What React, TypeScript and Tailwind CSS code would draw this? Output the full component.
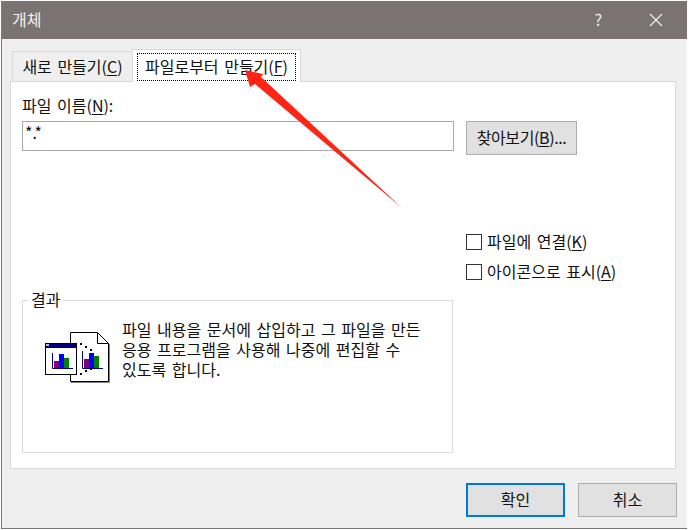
import React from 'react';

const FONT = "font-['Noto_Sans_CJK_KR','Noto_Sans',sans-serif] [word-spacing:2px]";

function Key({ children }: { children: React.ReactNode }) {
  return <span className="underline underline-offset-2">{children}</span>;
}

function Checkbox({ label, k }: { label: string; k: string }) {
  return (
    <div className="flex items-center gap-[5px] h-[16px]">
      <div className="w-[16px] h-[16px] border border-[#333] bg-white" />
      <span className="text-[16px] leading-[16px] pb-[3px] text-[#111] whitespace-nowrap">
        {label}(<Key>{k}</Key>)
      </span>
    </div>
  );
}

function ObjectIcon() {
  return (
    <svg width="65" height="52" viewBox="0 0 65 52" className="shrink-0">
      {/* back page */}
      <path d="M25.500 .5H52.500L63.500 11.500V49.500H25.500Z" fill="#fff" stroke="#000" />
      <path d="M52.500 .5V11.500H63.500" fill="none" stroke="#000" />
      <path d="M26 50.500H64.500V12" fill="none" stroke="#808080" />
      {/* chart in page */}
      <path d="M37.500 19V36.500H58" fill="none" stroke="#000080" />
      <rect x="39" y="27" width="5" height="9" fill="#800080" />
      <rect x="44" y="21" width="5" height="15" fill="#0000ff" />
      <rect x="49" y="24" width="5" height="12" fill="#008000" />
      {/* window */}
      <rect x="0.500" y="11.500" width="31" height="31" fill="#fff" stroke="#000" />
      <rect x="1" y="12" width="30" height="4" fill="#000080" />
      <rect x="1" y="12" width="3" height="2" fill="#c0c0c0" />
      <path d="M7.500 21V36.500H28" fill="none" stroke="#000080" />
      <rect x="9" y="29" width="5" height="7" fill="#800080" />
      <rect x="14" y="22" width="5" height="14" fill="#0000ff" />
      <rect x="19" y="26" width="5" height="10" fill="#008000" />
      {/* dotted link marks */}
      <g fill="#000">
        <rect x="35" y="11" width="2" height="2" />
        <rect x="40" y="14" width="2" height="2" />
        <rect x="45" y="17" width="2" height="2" />
        <rect x="45" y="36" width="2" height="2" />
        <rect x="40" y="38" width="2" height="2" />
        <rect x="35" y="41" width="2" height="2" />
      </g>
    </svg>
  );
}

export default function App() {
  return (
    <div className={`${FONT} relative w-[689px] h-[530px] bg-white overflow-hidden`}>
      <div className="mt-px ml-px w-[686px] h-[528px] border-l border-b border-[#7a7a7a] bg-[#efefef] flex flex-col">
        {/* Title bar */}
        <div className="h-[38px] shrink-0 bg-[#7b7371] flex items-center pl-[10px] text-[#f0f0f0]">
          <span className="text-[16px] pb-[2px]">개체</span>
          <span className="ml-auto text-[16px] pb-[2px] mr-[47px]">?</span>
          <svg width="14" height="14" viewBox="0 0 14 14" className="mr-[24px]">
            <path d="M1 1L13 13M13 1L1 13" stroke="#f4f4f4" strokeWidth="1.100" fill="none" />
          </svg>
        </div>

        <div className="pl-[8px] pr-[11px] pt-[10px]">
          {/* Tabs */}
          <div className="flex items-end h-[32px] pl-[2px] relative z-10">
            <div className="w-[120px] h-[30px] border-t border-l border-[#d9d9d9] flex items-center justify-center text-[16px] pb-[2px] text-[#111] whitespace-nowrap">
              새로 만들기(<Key>C</Key>)
            </div>
            <div className="w-[169px] h-[33px] -mb-px border-t border-x border-[#d9d9d9] bg-white px-[4px] pt-[3px] pb-[1px] text-[16px] text-[#111]">
              <div className="h-full border border-dotted border-black flex items-center justify-center pb-[2px] whitespace-nowrap">
                파일로부터 만들기(<Key>F</Key>)
              </div>
            </div>
          </div>

          {/* Panel */}
          <div className="h-[388px] border border-[#d9d9d9] bg-white px-[11px] pt-[13px] text-[#111]">
            <div className="text-[16px] leading-[20px] h-[26px]">
              파일 이름(<Key>N</Key>):
            </div>
            <div className="flex gap-[12px] items-start">
              <div className="w-[432px] h-[30px] border border-[#a9a9a9] px-[2px] text-[16px] leading-[20px]">*.*</div>
              <div className="w-[111px] h-[34px] border border-[#adadad] bg-[#e1e1e1] flex items-center justify-center text-[16px] tracking-[-0.4px] pb-[2px] whitespace-nowrap">
                찾아보기(<Key>B</Key>)...
              </div>
            </div>

            <div className="flex flex-col gap-[14px] mt-[79px] ml-[444px]">
              <Checkbox label="파일에 연결" k="K" />
              <Checkbox label="아이콘으로 표시" k="A" />
            </div>

            {/* Result group */}
            <div className="relative mt-[20px] w-[431px] h-[153px] border border-[#dcdcdc] pl-[22px] pt-[18px] flex gap-[12px]">
              <span className="absolute left-[5px] -top-[12px] bg-white px-[3px] text-[16px] leading-[20px]">결과</span>
              <div className="pt-[13px]">
                <ObjectIcon />
              </div>
              <p className="text-[16px] leading-[20px] whitespace-nowrap">
                파일 내용을 문서에 삽입하고 그 파일을 만든
                <br />
                응용 프로그램을 사용해 나중에 편집할 수
                <br />
                있도록 합니다.
              </p>
            </div>
          </div>

          {/* Footer buttons */}
          <div className="flex gap-[13px] justify-end mt-[14px] -mr-[1px]">
            <div className="w-[99px] h-[34px] border-2 border-[#0078d7] bg-[#e1e1e1] flex items-center justify-center text-[16px] pb-[2px] text-[#111]">
              확인
            </div>
            <div className="w-[99px] h-[34px] border border-[#adadad] bg-[#e1e1e1] flex items-center justify-center text-[16px] pb-[2px] text-[#111]">
              취소
            </div>
          </div>
        </div>
      </div>

      {/* Red annotation arrow */}
      <svg className="absolute left-0 top-0 pointer-events-none z-20" width="689" height="530" viewBox="0 0 689 530">
        <path d="M245 70L263 74L261 77L402 208L255 84L250 87Z" fill="#ff2414" />
      </svg>
    </div>
  );
}
